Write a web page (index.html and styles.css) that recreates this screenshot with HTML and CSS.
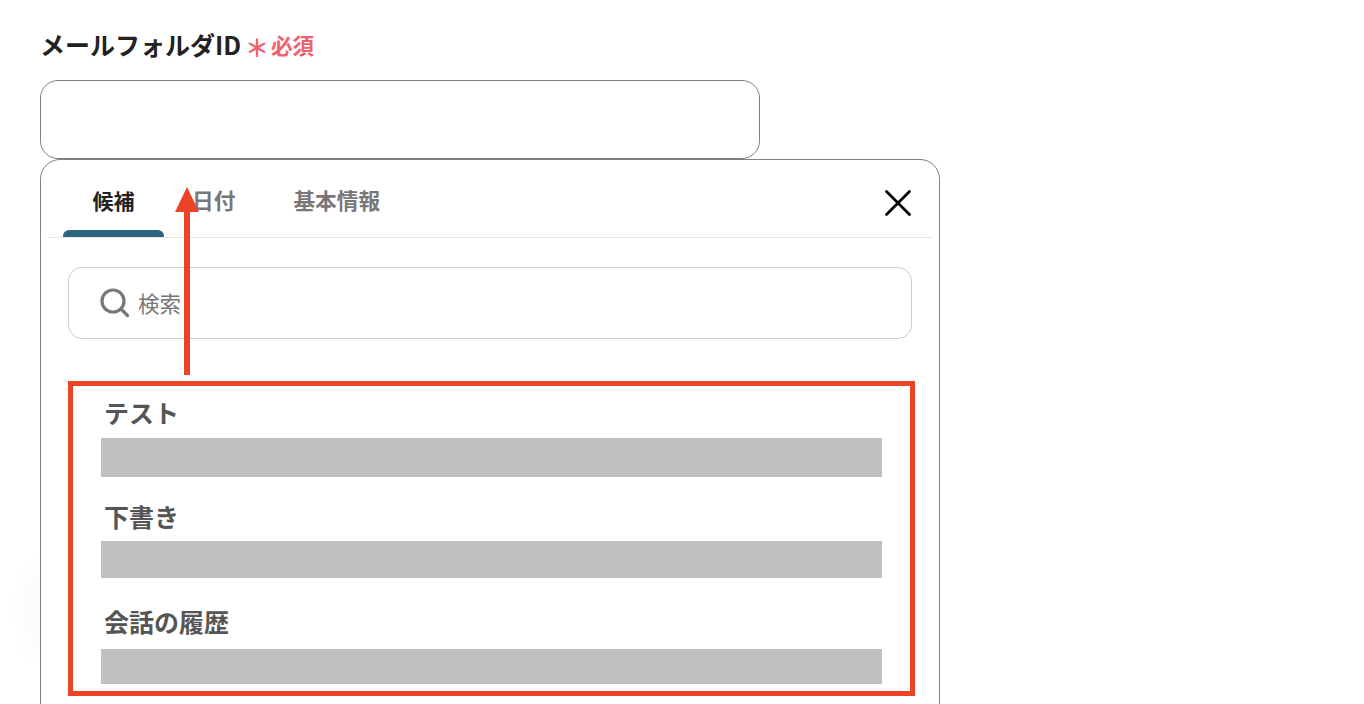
FILE: index.html
```html
<!DOCTYPE html>
<html lang="ja">
<head>
<meta charset="utf-8">
<title>メールフォルダID</title>
<link rel="stylesheet" href="styles.css">
</head>
<body>
<main class="page">
  <div class="field-label">
    <span class="label-text">メールフォルダID</span>
    <span class="req-mark">＊</span>
    <span class="req-text">必須</span>
  </div>
  <div class="text-input"></div>
  <section class="panel">
    <div class="tabs">
      <div class="tab tab-active">候補</div>
      <div class="tab tab-date">日付</div>
      <div class="tab tab-info">基本情報</div>
      <svg class="close" width="28" height="28" viewBox="0 0 28 28" aria-hidden="true">
        <path d="M2.5 2.5 L25.5 25.5 M25.5 2.5 L2.5 25.5" stroke="#000" stroke-width="2.8" stroke-linecap="round" fill="none"/>
      </svg>
    </div>
    <div class="search">
      <svg class="search-icon" width="30" height="30" viewBox="0 0 30 30" aria-hidden="true">
        <circle cx="13" cy="13" r="11" stroke="#777" stroke-width="3.2" fill="none"/>
        <path d="M21 21 L27.5 27.5" stroke="#777" stroke-width="3.2" stroke-linecap="round"/>
      </svg>
      <span class="search-text">検索</span>
    </div>
    <div class="list">
      <div class="item item-1">
        <div class="item-title">テスト</div>
        <div class="item-bar bar-1"></div>
      </div>
      <div class="item item-2">
        <div class="item-title">下書き</div>
        <div class="item-bar bar-2"></div>
      </div>
      <div class="item item-3">
        <div class="item-title">会話の履歴</div>
        <div class="item-bar bar-3"></div>
      </div>
    </div>
  </section>
</main>
<div class="red-box"></div>
<svg class="arrow" width="24" height="189" viewBox="0 0 24 189" aria-hidden="true">
  <path d="M12 0 L24 25 L0 25 Z" fill="#ec4225"/>
  <rect x="9" y="25" width="6" height="163" fill="#ec4225"/>
</svg>
</body>
</html>
```
FILE: styles.css
```css
* { box-sizing: border-box; }
html, body {
  margin: 0;
  height: 704px;
  overflow: hidden;
  background: #fff;
}
body {
  position: relative;
  font-family: "Noto Sans CJK JP", "Liberation Sans", sans-serif;
}
.page {
  position: relative;
  height: 704px;
  overflow: hidden;
  padding: 26px 0 0 40px;
  width: 1000px;
}
.page::before {
  content: "";
  position: absolute;
  left: 40px;
  top: 580px;
  width: 2px;
  height: 60px;
  box-shadow: 0 0 26px 12px rgba(0, 30, 30, 0.028);
}
.field-label {
  display: flex;
  align-items: center;
  height: 36px;
  margin-bottom: 18px;
}
.label-text {
  font-size: 25px;
  font-weight: 700;
  color: #222;
}
.req-mark {
  font-size: 24px;
  line-height: 36px;
  font-weight: 700;
  color: #f0616d;
  margin: 6px 0 0 4px;
}
.req-text {
  font-size: 21.5px;
  line-height: 36px;
  font-weight: 700;
  color: #f0616d;
  margin: 2px 0 0 2px;
}
.text-input {
  width: 720px;
  height: 79px;
  border: 1px solid #808080;
  border-radius: 18px;
}
.panel {
  position: relative;
  width: 900px;
  height: 600px;
  background: #fff;
  border: 1px solid #808080;
  border-radius: 20px;
  padding: 0 6px;
}
.tabs {
  display: flex;
  height: 78px;
  border-bottom: 1px solid #e4e4e4;
  font-size: 21.7px;
  font-weight: 700;
  color: #777;
}
.tab {
  display: flex;
  align-items: center;
  justify-content: center;
  height: 77px;
  padding-top: 2px;
}
.tab-active {
  position: relative;
  width: 101px;
  margin-left: 16px;
  font-size: 21px;
  color: #222;
}
.tab-active::after {
  content: "";
  position: absolute;
  left: 0;
  right: 0;
  bottom: 0;
  height: 7px;
  background: #2c6580;
  border-radius: 6px 6px 0 0;
}
.tab-date { margin-left: 28px; }
.tab-info { margin-left: 58px; }
.close {
  margin: 9px 21px 0 auto;
  align-self: center;
}
.search {
  display: flex;
  align-items: center;
  margin: 29px 21px 0 21px;
  height: 72px;
  border: 1px solid #ccc;
  border-radius: 14px;
  padding-left: 31px;
}
.search-icon { flex: none; }
.search-text {
  font-size: 21.5px;
  color: #777;
  margin: 0 0 2px 8px;
}
.list {
  margin: 42px 0 0 54px;
  width: 781px;
}
.item-title {
  font-size: 25px;
  font-weight: 700;
  color: #555;
  margin-left: 3px;
  line-height: 36px;
}
.item-bar { background: #c0c0c0; }
.item-1 .item-title { height: 57px; padding-top: 13px; }
.bar-1 { height: 39px; }
.item-2 .item-title { height: 64px; padding-top: 21px; }
.bar-2 { height: 37px; }
.item-3 .item-title { height: 71px; padding-top: 25px; }
.bar-3 { height: 35px; }
.red-box {
  position: absolute;
  left: 68px;
  top: 381px;
  width: 847px;
  height: 315px;
  border: 5px solid #ec4225;
}
.arrow {
  position: absolute;
  left: 175px;
  top: 187px;
}
```
